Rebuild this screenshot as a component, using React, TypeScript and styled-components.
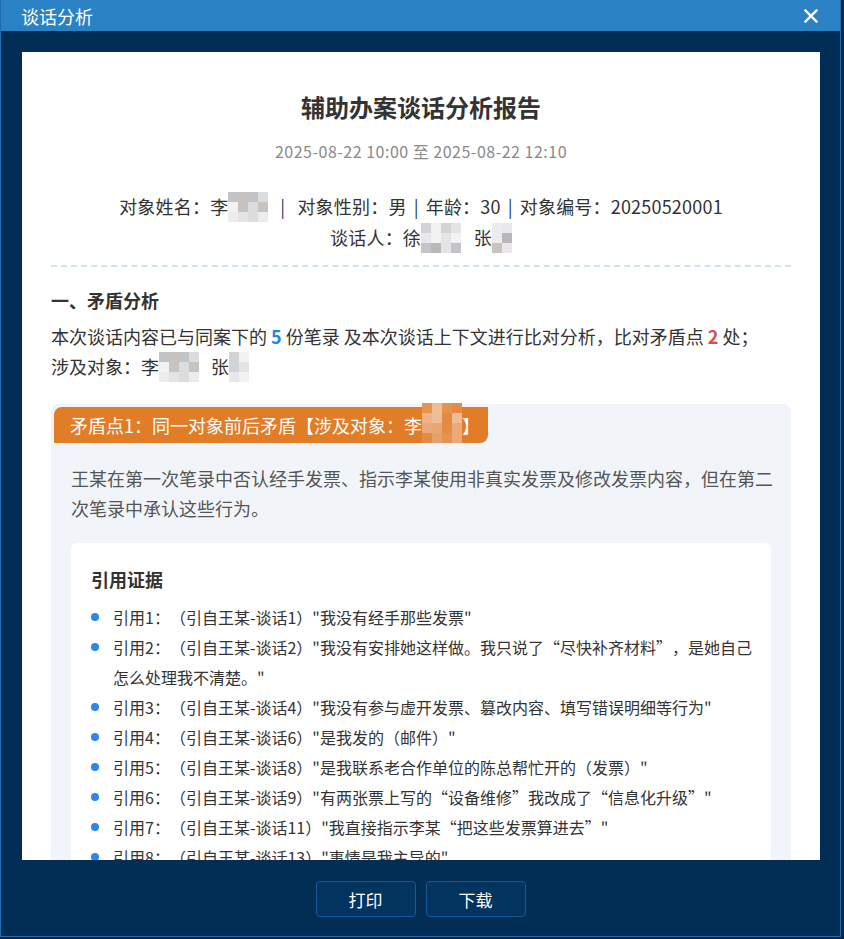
import React from 'react';
import styled, { createGlobalStyle } from 'styled-components';

const GlobalStyle = createGlobalStyle`
  html, body {
    margin: 0;
    padding: 0;
    background: #0a2744;
  }
  body {
    font-family: "Noto Sans CJK SC", "Noto Sans", sans-serif;
    text-spacing-trim: space-all;
  }
  * {
    box-sizing: border-box;
  }
`;

const Modal = styled.div`
  width: 841px;
  height: 937px;
  display: flex;
  flex-direction: column;
  background: #022d55;
  border: 1px solid #1f6db0;
  border-top: none;
`;

const TitleBar = styled.div`
  height: 31px;
  flex-shrink: 0;
  display: flex;
  align-items: center;
  justify-content: space-between;
  padding: 0 21px 0 20px;
  background: #2a82c4;
  color: #fff;
  font-size: 18px;
`;

const CloseButton = styled.button`
  border: none;
  background: none;
  padding: 0;
  width: 16px;
  height: 16px;
  display: flex;
  align-items: center;
  justify-content: center;
  cursor: pointer;
`;

const Body = styled.div`
  flex: 1;
  min-height: 0;
  padding: 21px 20px 0 21px;
  display: flex;
`;

const Paper = styled.div`
  flex: 1;
  background: #fff;
  overflow: hidden;
  padding: 38px 29px 0 29px;
  color: #333;
`;

const ReportTitle = styled.h1`
  margin: 0;
  text-align: center;
  font-size: 24px;
  line-height: 34px;
  font-weight: 700;
  color: #333;
`;

const DateLine = styled.div`
  margin-top: 15px;
  text-align: center;
  font-size: 16px;
  letter-spacing: 0.5px;
  line-height: 24px;
  color: #8a8a8a;
`;

const InfoBlock = styled.div`
  margin-top: 28px;
  text-align: center;
  font-size: 18px;
  line-height: 31px;
  color: #333;
  letter-spacing: 0.2px;
`;

const Sep = styled.span<{ $wide?: boolean }>`
  color: #1d3f6e;
  margin: 0 ${p => (p.$wide ? 12 : 7)}px;
`;

const Divider = styled.div`
  margin-top: 12px;
  border-top: 2px dashed #cde3f7;
`;

const SectionTitle = styled.h2`
  margin: 20px 0 0;
  font-size: 18px;
  line-height: 26px;
  font-weight: 700;
  color: #333;
`;

const Summary = styled.p`
  margin: 8px 0 0;
  font-size: 18px;
  line-height: 30px;
  color: #333;
`;

const Num = styled.b<{ $tone: 'blue' | 'red' }>`
  color: ${p => (p.$tone === 'blue' ? '#1e88e5' : '#e04a4a')};
  font-weight: 700;
`;

const ConflictCard = styled.div`
  margin-top: 22px;
  background: #f1f5f9;
  border-radius: 8px;
  padding: 3px 20px 20px 3px;
`;

const ConflictTag = styled.div`
  display: inline-flex;
  align-items: center;
  height: 36px;
  padding: 0 8px 0 16px;
  background: #e07d26;
  color: #fff;
  font-size: 18px;
  border-radius: 8px 0 8px 0;
`;

const ConflictText = styled.p`
  margin: 20px -4px 0 17px;
  font-size: 18px;
  line-height: 30px;
  color: #555;
`;

const Evidence = styled.div`
  margin: 20px 0 0 17px;
  background: #fff;
  border-radius: 6px;
  padding: 23px 20px 20px;
`;

const EvidenceTitle = styled.h3`
  margin: 0;
  font-size: 18px;
  line-height: 26px;
  font-weight: 700;
  color: #333;
`;

const QuoteList = styled.ul`
  margin: 10px -8px 0 0;
  padding: 0;
  list-style: none;
`;

const QuoteItem = styled.li`
  position: relative;
  padding-left: 22px;
  font-size: 16px;
  line-height: 30px;
  color: #333;

  &::before {
    content: '';
    position: absolute;
    left: 0;
    top: 11px;
    width: 8px;
    height: 8px;
    border-radius: 50%;
    background: #2b88e8;
  }
`;

const Footer = styled.div`
  flex-shrink: 0;
  display: flex;
  justify-content: center;
  gap: 10px;
  padding: 21px 0 19px;
`;

const FooterButton = styled.button`
  width: 100px;
  height: 36px;
  border: 1px solid #155a98;
  border-radius: 4px;
  background: #03335f;
  color: #fff;
  font-family: inherit;
  font-size: 17px;
  cursor: pointer;
`;

const MosaicGrid = styled.span<{ $cols: number }>`
  display: inline-grid;
  grid-template-columns: repeat(${p => p.$cols}, 10px);
  grid-auto-rows: 10px;
  vertical-align: middle;
  margin-top: -4px;
`;

const grayTones = ['#ececee', '#dcdcde', '#c9c3c0', '#c2c4c8', '#e4e4e6', '#f2f2f3', '#d3d3d6', '#b9b7b9', '#e8e8ea'];
const orangeTones = ['#eab48a', '#e79a5a', '#e6a06a', '#eca879', '#e38b44', '#efbd95', '#e59450', '#e8a672', '#eeb285'];

const Mosaic: React.FC<{ cols: number; rows?: number; tone?: 'gray' | 'orange'; seed?: number }> = ({
  cols,
  rows = 3,
  tone = 'gray',
  seed = 1,
}) => {
  const palette = tone === 'gray' ? grayTones : orangeTones;
  const cells = Array.from({ length: cols * rows }, (_, i) => palette[(i * 7 + seed * 3 + ((i * i) % 5)) % palette.length]);
  return (
    <MosaicGrid $cols={cols}>
      {cells.map((c, i) => (
        <span key={i} style={{ background: c }} />
      ))}
    </MosaicGrid>
  );
};

const quotes = [
  '引用1：（引自王某-谈话1）"我没有经手那些发票"',
  '引用2：（引自王某-谈话2）"我没有安排她这样做。我只说了“尽快补齐材料”，是她自己怎么处理我不清楚。"',
  '引用3：（引自王某-谈话4）"我没有参与虚开发票、篡改内容、填写错误明细等行为"',
  '引用4：（引自王某-谈话6）"是我发的（邮件）"',
  '引用5：（引自王某-谈话8）"是我联系老合作单位的陈总帮忙开的（发票）"',
  '引用6：（引自王某-谈话9）"有两张票上写的“设备维修”我改成了“信息化升级”"',
  '引用7：（引自王某-谈话11）"我直接指示李某“把这些发票算进去”"',
  '引用8：（引自王某-谈话13）"事情是我主导的"',
];

const App: React.FC = () => {
  return (
    <>
      <GlobalStyle />
      <Modal>
        <TitleBar>
          <span>谈话分析</span>
          <CloseButton aria-label="关闭">
            <svg width="14" height="14" viewBox="0 0 14 14">
              <path d="M1.5 1.5 L12.5 12.5 M12.5 1.5 L1.5 12.5" stroke="#fff" strokeWidth="2.4" strokeLinecap="square" />
            </svg>
          </CloseButton>
        </TitleBar>

        <Body>
          <Paper>
            <ReportTitle>辅助办案谈话分析报告</ReportTitle>
            <DateLine>2025-08-22 10:00 至 2025-08-22 12:10</DateLine>

            <InfoBlock>
              <div>
                对象姓名：李<Mosaic cols={4} seed={1} />
                <Sep $wide>|</Sep>对象性别：男<Sep>|</Sep>年龄：30<Sep>|</Sep>对象编号：20250520001
              </div>
              <div>
                谈话人：徐<Mosaic cols={4} seed={2} />
                &nbsp;&nbsp;&nbsp;张<Mosaic cols={2} seed={3} />
              </div>
            </InfoBlock>

            <Divider />

            <SectionTitle>一、矛盾分析</SectionTitle>
            <Summary>
              本次谈话内容已与同案下的 <Num $tone="blue">5</Num> 份笔录 及本次谈话上下文进行比对分析，比对矛盾点{' '}
              <Num $tone="red">2</Num> 处；
              <br />
              涉及对象：李<Mosaic cols={4} seed={4} />
              &nbsp;&nbsp;&nbsp;张<Mosaic cols={2} seed={5} />
            </Summary>

            <ConflictCard>
              <ConflictTag>
                矛盾点1：同一对象前后矛盾【涉及对象：李<Mosaic cols={4} rows={4} tone="orange" seed={2} />】
              </ConflictTag>
              <ConflictText>
                王某在第一次笔录中否认经手发票、指示李某使用非真实发票及修改发票内容，但在第二次笔录中承认这些行为。
              </ConflictText>

              <Evidence>
                <EvidenceTitle>引用证据</EvidenceTitle>
                <QuoteList>
                  {quotes.map(q => (
                    <QuoteItem key={q}>{q}</QuoteItem>
                  ))}
                </QuoteList>
              </Evidence>
            </ConflictCard>
          </Paper>
        </Body>

        <Footer>
          <FooterButton>打印</FooterButton>
          <FooterButton>下载</FooterButton>
        </Footer>
      </Modal>
    </>
  );
};

export default App;
